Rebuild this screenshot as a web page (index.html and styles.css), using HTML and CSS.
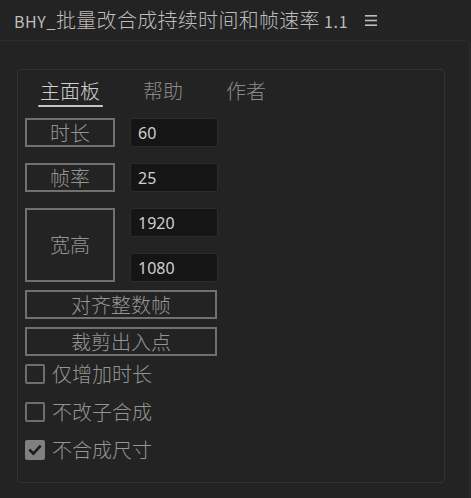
FILE: index.html
```html
<!DOCTYPE html>
<html lang="zh-CN">
<head>
<meta charset="utf-8">
<title>BHY_批量改合成持续时间和帧速率</title>
<link rel="stylesheet" href="styles.css">
</head>
<body>
<header class="titlebar">
  <span class="title">BHY_<span class="title-cjk">批量改合成持续时间和帧速率</span> 1.1</span>
  <svg class="menu" width="12" height="11" viewBox="0 0 12 11" aria-hidden="true">
    <rect x="0" y="0" width="12" height="1.6" fill="#bdbdbd"/>
    <rect x="0" y="4.7" width="12" height="1.6" fill="#bdbdbd"/>
    <rect x="0" y="9.4" width="12" height="1.6" fill="#bdbdbd"/>
  </svg>
</header>
<main class="panel">
  <section class="card">
    <nav class="tabs">
      <span class="tab active">主面板</span>
      <span class="tab">帮助</span>
      <span class="tab">作者</span>
    </nav>
    <div class="fields">
      <button class="btn">时长</button>
      <input class="num" type="text" value="60">
      <button class="btn">帧率</button>
      <input class="num" type="text" value="25">
      <button class="btn btn-tall">宽高</button>
      <input class="num" type="text" value="1920">
      <input class="num" type="text" value="1080">
    </div>
    <div class="actions">
      <button class="btn btn-wide">对齐整数帧</button>
      <button class="btn btn-wide">裁剪出入点</button>
    </div>
    <div class="checks">
      <label class="check"><span class="box"></span><span class="label">仅增加时长</span></label>
      <label class="check"><span class="box"></span><span class="label">不改子合成</span></label>
      <label class="check"><span class="box checked"><svg width="16" height="16" viewBox="0 0 16 16" aria-hidden="true"><path d="M3.2 8.4 L6.4 11.6 L12.8 4.6" fill="none" stroke="#1c1c1c" stroke-width="2.6" stroke-linecap="square"/></svg></span><span class="label">不合成尺寸</span></label>
    </div>
  </section>
</main>
</body>
</html>
```
FILE: styles.css
```css
* { box-sizing: border-box; }
html, body {
  margin: 0;
  padding: 0;
  background: #232323;
  width: 471px;
  height: 498px;
  overflow: hidden;
}
body {
  font-family: "Noto Sans CJK SC", "Noto Sans", sans-serif;
  color: #8f8f8f;
}
.titlebar {
  height: 40px;
  display: flex;
  align-items: center;
  padding-left: 14px;
}
.title {
  font-family: "Noto Sans CJK SC", sans-serif;
  font-size: 16px;
  color: #bdbdbd;
  letter-spacing: 0.6px;
  line-height: 20px;
}
.title-cjk {
  font-size: 20px;
  letter-spacing: 0.3px;
  font-weight: 300;
}
.menu {
  margin-left: 17px;
  display: block;
}
.panel {
  width: 470px;
  height: 458px;
  border-top: 1px solid #2e2e2e;
  border-right: 1px solid #2e2e2e;
  border-top-right-radius: 5px;
  padding-top: 28px;
  padding-left: 17px;
}
.card {
  width: 428px;
  height: 414px;
  border: 1px solid #333333;
  border-radius: 4px;
}
.tabs {
  display: flex;
  gap: 39px;
  padding: 9px 0 0 20px;
}
.tab {
  font-size: 20px;
  line-height: 24px;
  padding: 0 2px 4px;
  color: #8a8a8a;
  font-weight: 300;
  position: relative;
}
.tab.active {
  color: #cfcfcf;
}
.tab.active::after {
  content: "";
  position: absolute;
  left: 0;
  right: -1px;
  bottom: 0;
  height: 2.5px;
  border-radius: 1px;
  background: #c4c4c4;
}
.fields {
  display: grid;
  grid-template-columns: 90px 88px;
  grid-auto-rows: 29px;
  column-gap: 15px;
  row-gap: 16px;
  margin: 11px 0 0 7px;
}
.btn {
  font-family: "Noto Sans CJK SC", sans-serif;
  font-size: 20px;
  font-weight: 300;
  line-height: 1;
  color: #959595;
  background: transparent;
  border: 2px solid #707070;
  border-radius: 0;
  padding: 0;
  height: 29px;
  margin: 0;
}
.btn-tall {
  grid-row: span 2;
  height: auto;
}
.num {
  width: 88px;
  height: 29px;
  margin: 0;
  border: 1px solid #2b2b2b;
  border-radius: 3px;
  background: #151515;
  color: #cfcfcf;
  font-family: "Noto Sans", sans-serif;
  font-size: 16px;
  padding: 0 7px;
  outline: none;
}
.actions {
  display: flex;
  flex-direction: column;
  gap: 8px;
  margin: 8px 0 0 7px;
}
.btn-wide {
  width: 192px;
}
.checks {
  display: flex;
  flex-direction: column;
  gap: 18px;
  margin: 8px 0 0 7px;
}
.check {
  display: flex;
  align-items: center;
  height: 20px;
  gap: 7px;
}
.box {
  width: 20px;
  height: 20px;
  border: 2px solid #6e6e6e;
  border-radius: 2px;
  display: flex;
  align-items: center;
  justify-content: center;
}
.box.checked {
  background: #808080;
  border-color: #808080;
}
.box svg { display: block; }
.label {
  font-size: 20px;
  font-weight: 300;
  line-height: 20px;
  color: #959595;
}
```
